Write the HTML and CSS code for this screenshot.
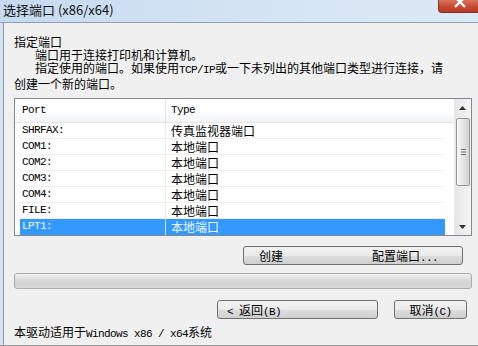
FILE: index.html
```html
<!DOCTYPE html>
<html lang="zh-CN">

<head>
    <meta charset="UTF-8">
    <title>选择端口 (x86/x64)</title>
    <link rel="stylesheet" href="styles.css">
</head>

<body>
    <div class="window">
        <div class="titlebar">
            <span class="title">选择端口 (x86/x64)</span>
            <div class="close">
                <svg width="40" height="13" viewBox="0 0 40 13">
                    <path d="M17 -3 L27 7 M27 -3 L17 7" stroke="#ffffff" stroke-width="2.4" fill="none" />
                </svg>
            </div>
        </div>

        <div class="frame">
            <div class="frame-edge"></div>
            <div class="content">
                <div class="intro">
                    <p>指定端口</p>
                    <p class="indent">端口用于连接打印机和计算机。</p>
                    <p class="indent">指定使用的端口。如果使用<span class="en">TCP/IP</span>或一下未列出的其他端口类型进行连接，请</p>
                    <p>创建一个新的端口。</p>
                </div>

                <div class="listbox">
                    <div class="grid">
                        <div class="head">
                            <div class="col-port en">Port</div>
                            <div class="col-type en">Type</div>
                        </div>
                        <div class="row">
                            <div class="col-port en">SHRFAX:</div>
                            <div class="col-type">传真监视器端口</div>
                        </div>
                        <div class="row">
                            <div class="col-port en">COM1:</div>
                            <div class="col-type">本地端口</div>
                        </div>
                        <div class="row">
                            <div class="col-port en">COM2:</div>
                            <div class="col-type">本地端口</div>
                        </div>
                        <div class="row">
                            <div class="col-port en">COM3:</div>
                            <div class="col-type">本地端口</div>
                        </div>
                        <div class="row">
                            <div class="col-port en">COM4:</div>
                            <div class="col-type">本地端口</div>
                        </div>
                        <div class="row">
                            <div class="col-port en">FILE:</div>
                            <div class="col-type">本地端口</div>
                        </div>
                        <div class="row selected">
                            <div class="col-port en">LPT1:</div>
                            <div class="col-type">本地端口</div>
                        </div>
                    </div>
                    <div class="scrollbar">
                        <div class="arrow">
                            <svg width="7" height="4" viewBox="0 0 7 4"><path d="M0 4 L3.5 0 L7 4 Z" fill="#333" /></svg>
                        </div>
                        <div class="thumb">
                            <svg width="5" height="6" viewBox="0 0 5 6">
                                <path d="M0 0.5 H5 M0 3 H5 M0 5.5 H5" stroke="#777" stroke-width="1" />
                            </svg>
                        </div>
                        <div class="track"></div>
                        <div class="arrow">
                            <svg width="7" height="4" viewBox="0 0 7 4"><path d="M0 0 L7 0 L3.5 4 Z" fill="#333" /></svg>
                        </div>
                    </div>
                </div>

                <div class="port-actions">
                    <button class="btn wide"><span>创建</span><span>配置端口<span class="en">...</span></span></button>
                </div>

                <div class="progress"></div>

                <div class="nav">
                    <button class="btn back"><span class="en">&lt;&nbsp;</span>返回<span class="en">(B)</span></button>
                    <button class="btn cancel">取消<span class="en">(C)</span></button>
                </div>

                <p class="footer">本驱动适用于<span class="en">Windows x86 / x64</span>系统</p>
            </div>
        </div>
    </div>
</body>

</html>
```

FILE: styles.css
```css
body {
    margin: 0;
    width: 478px;
    height: 346px;
    overflow: hidden;
    background: #f0f0f0;
    font-family: "Noto Sans CJK SC", sans-serif;
    font-size: 12px;
    color: #000;
}

p {
    margin: 0;
}

/* latin text in the dialog's fixed-width face */
.en {
    font-family: "Liberation Mono", "Noto Sans CJK SC", monospace;
    font-size: 11px;
    letter-spacing: -0.6px;
}

.window {
    display: flex;
    flex-direction: column;
    height: 346px;
}

/* title bar */
.titlebar {
    display: flex;
    align-items: flex-start;
    height: 22px;
    border-bottom: 1px solid #8fa0b4;
    background: linear-gradient(to right, #c6daf0, #d6e5f4 60%, #dce9f6);
}

.titlebar .title {
    padding-left: 3px;
    line-height: 20px;
    font-size: 13px;
    color: #111;
}

.titlebar .close {
    margin-left: auto;
    width: 40px;
    height: 13px;
    box-sizing: border-box;
    border: 1px solid #7d3426;
    border-top: none;
    border-right: none;
    border-bottom-left-radius: 4px;
    background: linear-gradient(to bottom, #d9745f, #c74a33 55%, #b93a24);
    overflow: hidden;
}

.titlebar .close svg {
    display: block;
    margin-left: -1px;
}

/* body frame */
.frame {
    flex: 1;
    display: flex;
    border-bottom: 1px solid #9a9a9a;
}

.frame-edge {
    width: 3px;
    background: #d4e2f2;
    border-right: 1px solid #8d9aab;
}

.content {
    flex: 1;
    display: flex;
    flex-direction: column;
    padding: 12px 6px 0 10px;
}

.intro p {
    line-height: 13px;
    white-space: nowrap;
}

.intro .indent {
    padding-left: 21px;
}

/* port list */
.listbox {
    display: flex;
    margin-top: 8px;
    height: 138px;
    box-sizing: border-box;
    border: 1px solid #828790;
    background: #fff;
}

.grid {
    flex: 1;
}

.head {
    display: flex;
    height: 24px;
    box-sizing: border-box;
    border-bottom: 1px solid #e5e5e5;
    background: linear-gradient(to bottom, #ffffff 45%, #f3f4f6);
    line-height: 23px;
}

.head .col-port {
    width: 151px;
    box-sizing: border-box;
    padding-left: 7px;
    border-right: 1px solid #e3e5e8;
}

.head .col-type {
    padding-left: 5px;
}

.row {
    display: flex;
    height: 16px;
    box-sizing: border-box;
    margin: 0 9px 0 5px;
    border-bottom: 1px solid #eeeeee;
    line-height: 15px;
}

.row .col-port {
    width: 146px;
    box-sizing: border-box;
    padding-left: 2px;
    border-right: 1px solid #eeeeee;
}

.row .col-type {
    padding-left: 5px;
}

.row.selected {
    border-bottom: none;
    background: #3399ff;
    color: #f2f8ff;
}

.row.selected .col-port {
    border-right-color: #cfe6ff;
}

.scrollbar {
    width: 17px;
    display: flex;
    flex-direction: column;
    background: linear-gradient(to right, #e6e6e6, #f4f4f4);
}

.scrollbar .arrow {
    height: 17px;
    display: flex;
    align-items: center;
    justify-content: center;
}

.scrollbar .thumb {
    margin: 2px 1px 0 2px;
    height: 68px;
    box-sizing: border-box;
    border: 1px solid #979797;
    border-radius: 2px;
    background: linear-gradient(to right, #f6f6f6, #e4e4e4 50%, #d3d3d3);
    display: flex;
    align-items: center;
    justify-content: center;
}

.scrollbar .track {
    flex: 1;
}

/* buttons */
.btn {
    height: 19px;
    box-sizing: border-box;
    border: 1px solid #707070;
    border-radius: 3px;
    padding: 0;
    background: linear-gradient(to bottom, #f2f2f2, #ebebeb 50%, #dddddd 51%, #cfcfcf);
    font-family: "Noto Sans CJK SC", sans-serif;
    font-size: 12px;
    line-height: 17px;
    color: #000;
}

.port-actions {
    display: flex;
    justify-content: flex-end;
    margin-top: 10px;
    padding-right: 9px;
}

.btn.wide {
    width: 220px;
    display: flex;
    justify-content: space-between;
    padding: 0 24px 0 15px;
}

.progress {
    margin-top: 8px;
    height: 16px;
    box-sizing: border-box;
    border: 1px solid #acacac;
    border-radius: 3px;
    background: linear-gradient(to bottom, #f2f2f2, #dedede 35%, #d2d2d2 65%, #dadada);
}

.nav {
    display: flex;
    justify-content: flex-end;
    gap: 16px;
    margin-top: 11px;
    padding-right: 5px;
}

.btn.back {
    width: 161px;
    text-align: left;
    padding-left: 9px;
}

.btn.cancel {
    width: 73px;
}

.footer {
    margin-top: 6px;
    line-height: 13px;
}
```
